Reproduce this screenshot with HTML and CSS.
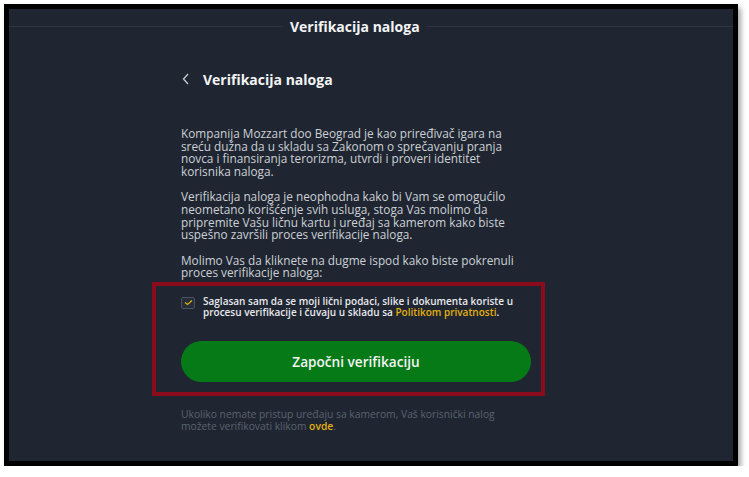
FILE: index.html
```html
<!DOCTYPE html>
<html lang="sr">
<head>
    <meta charset="UTF-8">
    <meta name="viewport" content="width=device-width, initial-scale=1.0">
    <title>Verifikacija naloga</title>
    <link rel="stylesheet" href="styles.css">
</head>
<body>
    <div class="frame">
        <div class="screen">
            <div class="topbar">
                <span class="topbar-title">Verifikacija naloga</span>
            </div>

            <div class="content">
                <div class="heading">
                    <svg class="back" width="8" height="12" viewBox="0 0 8 12">
                        <path d="M6 1 L1.5 6 L6 11" fill="none" stroke="#c9ccd1" stroke-width="1.3"/>
                    </svg>
                    <h1>Verifikacija naloga</h1>
                </div>

                <p class="text">Kompanija Mozzart doo Beograd je kao priređivač igara na sreću dužna da u skladu sa Zakonom o sprečavanju pranja novca i finansiranja terorizma, utvrdi i proveri identitet korisnika naloga.</p>
                <p class="text">Verifikacija naloga je neophodna kako bi Vam se omogućilo neometano korišćenje svih usluga, stoga Vas molimo da pripremite Vašu ličnu kartu i uređaj sa kamerom kako biste uspešno završili proces verifikacije naloga.</p>
                <p class="text">Molimo Vas da kliknete na dugme ispod kako biste pokrenuli proces verifikacije naloga:</p>

                <div class="consent-box">
                    <label class="consent">
                        <span class="checkbox">
                            <svg width="9" height="7" viewBox="0 0 9 7">
                                <path d="M1 3.5 L3.5 5.5 L8 1.5" fill="none" stroke="#e2b00f" stroke-width="1.3"/>
                            </svg>
                        </span>
                        <span>Saglasan sam da se moji lični podaci, slike i dokumenta koriste u procesu verifikacije i čuvaju u skladu sa <a href="#">Politikom privatnosti</a>.</span>
                    </label>
                    <button class="btn-start">Započni verifikaciju</button>
                </div>

                <p class="note">Ukoliko nemate pristup uređaju sa kamerom, Vaš korisnički nalog možete verifikovati klikom <a href="#">ovde</a>.</p>
            </div>
        </div>
    </div>
</body>
</html>
```

FILE: styles.css
```css
body {
    margin: 0;
    padding: 0;
    background-color: #ffffff;
    font-family: "Open Sans", "Liberation Sans", sans-serif;
}

.frame {
    margin: 4px 0 0 4px;
    width: 724px;
    height: 452px;
    border: 5px solid #000000;
    box-shadow: 3px 4px 5px rgba(0, 0, 0, 0.35); /* sombra do print */
}

.screen {
    height: 100%;
    background-color: #1f2632;
    display: flex;
    flex-direction: column;
}

.topbar {
    height: 34px;
    display: flex;
    align-items: center;
    gap: 7px;
}

.topbar::before,
.topbar::after {
    content: "";
    flex: 1;
    height: 1px;
    background-color: #2d3542;
}

.topbar::before {
    flex: 0 0 274px;
}

.topbar-title {
    color: #f4f4f4;
    font-size: 14px;
    font-weight: 700;
}

.content {
    width: 348px;
    margin-left: 172px;
}

.heading {
    display: flex;
    align-items: center;
    gap: 13px;
    margin-top: 27px;
    height: 18px;
}

.back {
    margin-left: 1px;
}

.heading h1 {
    margin: 0;
    font-size: 14px;
    font-weight: 700;
    color: #f4f4f4;
}

.text {
    margin: 39px 0 0;
    font-size: 11.8px;
    line-height: 12.6px;
    color: #cdd0d5;
}

.text + .text {
    margin-top: 13px;
}

.consent-box {
    margin: 3px -16px 0 -29px;
    padding: 10px 13px 10px 25px;
    border: 4px solid #8a0b1b;
}

.consent {
    display: flex;
    align-items: flex-start;
    gap: 8px;
    font-size: 10px;
    line-height: 11.5px;
    font-weight: 600;
    color: #e8e9ec;
}

.checkbox {
    flex: none;
    width: 12px;
    height: 10px;
    margin-top: 1px;
    border: 1px solid #4b5361;
    border-radius: 2px;
    background-color: #252d39;
    display: flex;
    align-items: center;
    justify-content: center;
}

a {
    color: #e2b00f;
    text-decoration: none;
}

.btn-start {
    display: block;
    width: 350px;
    height: 41px;
    margin-top: 22px;
    border: none;
    border-radius: 21px;
    background-color: #077a18;
    color: #f4f4f4;
    font-family: inherit;
    font-size: 13.6px;
    font-weight: 600;
}

.note {
    margin: 12px 0 0;
    font-size: 10.3px;
    line-height: 12.5px;
    color: #5b626e;
}

.note a {
    font-weight: 600;
}
```
